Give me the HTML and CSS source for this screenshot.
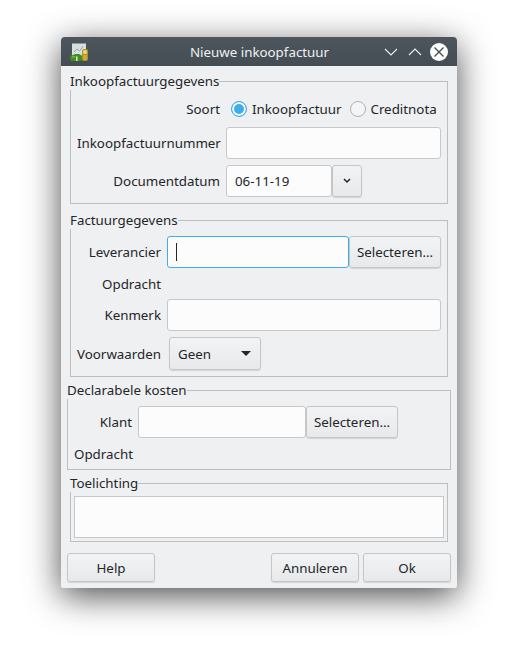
FILE: index.html
```html
<!DOCTYPE html>
<html lang="nl">
<head>
  <meta charset="UTF-8">
  <title>Nieuwe inkoopfactuur</title>
  <link rel="stylesheet" href="styles.css">
</head>
<body>
  <div class="window">
    <div class="titlebar">
      <svg class="app-icon" width="18" height="18" viewBox="0 0 18 18">
        <rect x="2" y="0.5" width="14" height="12.5" fill="#d9dedf"/>
        <path d="M4 9 L7 6 L9.5 8 L13 3.5" fill="none" stroke="#8fa6b3" stroke-width="1"/>
        <path d="M0 15 Q0 12 3 12 L5 11 L9 11 L12.5 13 L12.5 17 L11 18 L1 18 Z" fill="#3f8f22"/>
        <rect x="2" y="13" width="3" height="1.5" fill="#6fb83f"/>
        <rect x="6" y="13.5" width="1.5" height="4.5" fill="#e4ebdc"/>
        <rect x="12" y="6" width="6" height="12" rx="2" fill="#b3942c"/>
        <rect x="13" y="7" width="4" height="4" rx="1.5" fill="#ead66c"/>
        <rect x="13.5" y="12" width="3" height="5" fill="#cdb03a"/>
      </svg>
      <span class="title">Nieuwe inkoopfactuur</span>
      <svg class="win-btn win-down" width="14" height="10" viewBox="0 0 14 10"><path d="M1 2 L7 8 L13 2" fill="none" stroke="#eff0f1" stroke-width="1.1"/></svg>
      <svg class="win-btn win-up" width="14" height="10" viewBox="0 0 14 10"><path d="M1 8 L7 2 L13 8" fill="none" stroke="#eff0f1" stroke-width="1.1"/></svg>
      <svg class="win-close" width="18" height="18" viewBox="0 0 18 18">
        <circle cx="9" cy="9" r="9" fill="#fcfcfc"/>
        <path d="M4.5 4.5 L13.5 13.5 M13.5 4.5 L4.5 13.5" stroke="#475057" stroke-width="1.4"/>
      </svg>
    </div>

    <div class="content">
      <fieldset class="group group-purchase">
        <legend>Inkoopfactuurgegevens</legend>
        <div class="form-row row-soort">
          <label class="form-label">Soort</label>
          <span class="radio radio-on"></span><span class="radio-text">Inkoopfactuur</span>
          <span class="radio radio-off"></span><span class="radio-text">Creditnota</span>
        </div>
        <div class="form-row row-number">
          <label class="form-label">Inkoopfactuurnummer</label>
          <div class="input grow"></div>
        </div>
        <div class="form-row row-date">
          <label class="form-label">Documentdatum</label>
          <div class="input input-date">06-11-19</div>
          <div class="button button-date">
            <svg width="8" height="6" viewBox="0 0 8 6"><path d="M1 1 L4 4 L7 1" fill="none" stroke="#232629" stroke-width="1.5"/></svg>
          </div>
        </div>
      </fieldset>

      <fieldset class="group group-invoice">
        <legend>Factuurgegevens</legend>
        <div class="form-row row-supplier">
          <label class="form-label">Leverancier</label>
          <div class="input input-focus grow"><span class="caret"></span></div>
          <div class="button button-select">Selecteren...</div>
        </div>
        <div class="form-row row-order">
          <label class="form-label">Opdracht</label>
        </div>
        <div class="form-row row-ref">
          <label class="form-label">Kenmerk</label>
          <div class="input grow"></div>
        </div>
        <div class="form-row row-terms">
          <label class="form-label">Voorwaarden</label>
          <div class="button combo">Geen<span class="combo-arrow"></span></div>
        </div>
      </fieldset>

      <fieldset class="group group-costs">
        <legend>Declarabele kosten</legend>
        <div class="form-row row-client">
          <label class="form-label">Klant</label>
          <div class="input input-client"></div>
          <div class="button button-select">Selecteren...</div>
        </div>
        <div class="form-row row-order">
          <label class="form-label">Opdracht</label>
        </div>
      </fieldset>

      <fieldset class="group group-notes">
        <legend>Toelichting</legend>
        <div class="textarea"></div>
      </fieldset>

      <div class="footer">
        <div class="button button-footer">Help</div>
        <div class="spacer"></div>
        <div class="button button-footer">Annuleren</div>
        <div class="button button-footer">Ok</div>
      </div>
    </div>
  </div>
</body>
</html>
```

FILE: styles.css
```css
html, body { height: 100%; }
body { margin: 0; background: #fff; font-family: "Noto Sans", sans-serif; font-size: 13.33px; color: #232629; overflow: hidden; }

.window { width: 396px; height: 551px; margin: 37px 0 0 61px; background: #eff0f1; border-radius: 4px 4px 2px 2px; box-shadow: 0 8px 34px rgba(0,0,0,.7); }

.titlebar { height: 29px; background: linear-gradient(#4d565d, #444d54); border-radius: 4px 4px 0 0; display: flex; align-items: center; padding: 0 9px; color: #eff0f1; }
.app-icon { flex: none; }
.title { flex: 1; text-align: center; padding-left: 47px; }
.win-btn { flex: none; }
.win-down { margin-right: 10px; }
.win-up { margin-right: 8px; }
.win-close { flex: none; }

.content { padding: 6px 6px 0; }

.group { box-sizing: border-box; margin: 0; padding: 0 6px; border: 1px solid #bcbebf; min-width: 0; }
.group legend { padding: 0; margin-left: -7px; line-height: 18px; }
.group-purchase, .group-invoice, .group-notes { margin-left: 3px; margin-right: 3px; }
.group-purchase { height: 132px; }
.group-invoice { height: 166px; margin-top: 7px; }
.group-costs { height: 89px; margin-top: 4px; }
.group-notes { height: 68px; margin-top: 4px; padding: 0 3px; }
.group-notes legend { margin-left: -4px; }

.form-row { display: flex; align-items: center; }
.form-label { flex: none; text-align: right; margin-right: 6px; }

.group-purchase .form-label { width: 143px; }
.group-invoice .form-label { width: 84px; }
.group-costs .form-label { width: 58px; }

.row-soort { height: 22px; margin-top: 8px; }
.row-soort .form-label { margin-right: 11px; }
.row-number { margin-top: 7px; }
.row-date { margin-top: 6px; }
.row-supplier, .row-client { margin-top: 7px; }
.row-order { height: 18px; margin-top: 7px; }
.row-ref, .row-terms { margin-top: 6px; }

.input { height: 30px; border: 1px solid #c6c8c9; border-radius: 3px; background: #fcfcfc; }
.grow { flex: 1; min-width: 0; }
.input-date { flex: none; width: 96px; line-height: 30px; padding-left: 8px; }
.input-focus { border-color: #3daee9; display: flex; align-items: center; padding-left: 8px; }
.input-client { flex: none; width: 166px; }
.caret { width: 1px; height: 18px; background: #232629; }

.button { box-sizing: border-box; border: 1px solid #c4c6c7; border-radius: 3px; background: linear-gradient(#f2f3f4, #e8e9ea); box-shadow: 0 1px 1px rgba(0,0,0,.12); display: flex; align-items: center; justify-content: center; }
.button-date { width: 30px; height: 32px; }
.button-select { width: 92px; height: 32px; flex: none; }

.combo { width: 92px; height: 33px; margin-left: 2px; justify-content: space-between; padding: 0 8px; }
.combo-arrow { width: 0; height: 0; border-left: 5px solid transparent; border-right: 5px solid transparent; border-top: 5px solid #232629; margin-right: 1px; }

.radio { width: 16px; height: 16px; box-sizing: border-box; border-radius: 50%; flex: none; margin-right: 5px; }
.radio-on { border: 1px solid #3daee9; background: #3daee9; box-shadow: inset 0 0 0 2px #fcfcfc; }
.radio-off { border: 1px solid #b0b2b3; background: #f4f5f5; margin-left: 9px; margin-right: 4px; }
.radio-text { flex: none; }

.textarea { height: 40px; border: 1px solid #c6c8c9; background: #fcfcfc; margin-top: 4px; }

.footer { display: flex; gap: 4px; margin-top: 11px; }
.spacer { flex: 1; }
.button-footer { width: 88px; height: 29px; }
```
